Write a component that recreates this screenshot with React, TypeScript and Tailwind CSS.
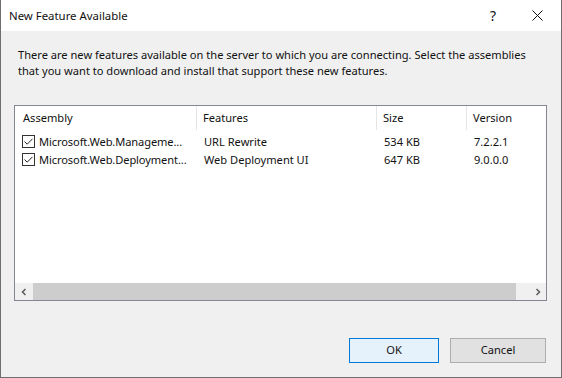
import React from "react";

const rows = [
  { name: "Microsoft.Web.Manageme...", feature: "URL Rewrite", size: "534 KB", version: "7.2.2.1" },
  { name: "Microsoft.Web.Deployment...", feature: "Web Deployment UI", size: "647 KB", version: "9.0.0.0" },
];

const CheckBox = () => (
  <div className="w-[13px] h-[13px] border border-[#333] bg-white flex items-center justify-center shrink-0">
    <svg width="11" height="11" viewBox="0 0 11 11">
      <path d="M1.5 5.5 L4.2 8.2 L9.5 2.8" fill="none" stroke="#222" strokeWidth="1" />
    </svg>
  </div>
);

const App = () => {
  return (
    <div
      className="w-[562px] h-[378px] flex flex-col border-x border-b border-[#6e6e6e] bg-[#f0f0f0] text-[11.1px] text-[#111] overflow-hidden"
      style={{ fontFamily: '"Noto Sans", "Open Sans", sans-serif' }}
    >
      {/* title bar */}
      <div className="h-[31px] bg-white flex items-center pl-[8px] shrink-0">
        <div className="flex-1 text-[11.4px]">New Feature Available</div>
        <div className="w-[20px] text-center mr-[24px] text-[14px]">?</div>
        <div className="w-[20px] flex justify-center mr-[14px]">
          <svg width="11" height="11" viewBox="0 0 11 11">
            <path d="M0.5 0.5 L10.5 10.5 M10.5 0.5 L0.5 10.5" stroke="#111" strokeWidth="1" />
          </svg>
        </div>
      </div>

      <div className="pl-[17px] pr-[10px] pt-[16px] leading-[16px] whitespace-nowrap">
        <p>There are new features available on the server to which you are connecting. Select the assemblies</p>
        <p>that you want to download and install that support these new features.</p>
      </div>

      {/* list */}
      <div className="ml-[13px] mt-[26px] w-[533px] h-[196px] border border-[#828790] bg-white flex flex-col">
        <div className="flex h-[24px] items-center shrink-0">
          <div className="w-[182px] pl-[8px] h-full flex items-center border-r border-[#e5e5e5]">Assembly</div>
          <div className="w-[180px] pl-[6px] h-full flex items-center border-r border-[#e5e5e5]">Features</div>
          <div className="w-[90px] pl-[6px] h-full flex items-center border-r border-[#e5e5e5]">Size</div>
          <div className="flex-1 pl-[6px] h-full flex items-center">Version</div>
        </div>
        <div className="flex-1 pt-[3px]">
          {rows.map((r) => (
            <div key={r.name} className="flex h-[18px] items-center">
              <div className="w-[182px] pl-[7px] flex items-center gap-[4px] overflow-hidden whitespace-nowrap">
                <CheckBox />
                <span className="tracking-[-0.1px]">{r.name}</span>
              </div>
              <div className="w-[180px] pl-[7px]">{r.feature}</div>
              <div className="w-[90px] pl-[7px]">{r.size}</div>
              <div className="flex-1 pl-[7px]">{r.version}</div>
            </div>
          ))}
        </div>
        {/* horizontal scrollbar */}
        <div className="h-[17px] flex bg-[#f0f0f0] shrink-0">
          <div className="w-[18px] flex items-center justify-center">
            <svg width="8" height="8" viewBox="0 0 8 8">
              <path d="M5.5 1 L2.5 4 L5.5 7" fill="none" stroke="#606060" strokeWidth="1.6" />
            </svg>
          </div>
          <div className="flex-1 flex items-center">
            <div className="h-full w-[483px] bg-[#cdcdcd]" />
          </div>
          <div className="w-[17px] flex items-center justify-center">
            <svg width="8" height="8" viewBox="0 0 8 8">
              <path d="M2.5 1 L5.5 4 L2.5 7" fill="none" stroke="#606060" strokeWidth="1.6" />
            </svg>
          </div>
        </div>
      </div>

      {/* buttons */}
      <div className="flex justify-end gap-[11px] mt-[37px] pr-[15px]">
        <button className="w-[90px] h-[25px] border border-[#0078d7] bg-[#e5f1fb]">OK</button>
        <button className="w-[96px] h-[25px] border border-[#adadad] bg-[#e1e1e1]">Cancel</button>
      </div>
    </div>
  );
};

export default App;
